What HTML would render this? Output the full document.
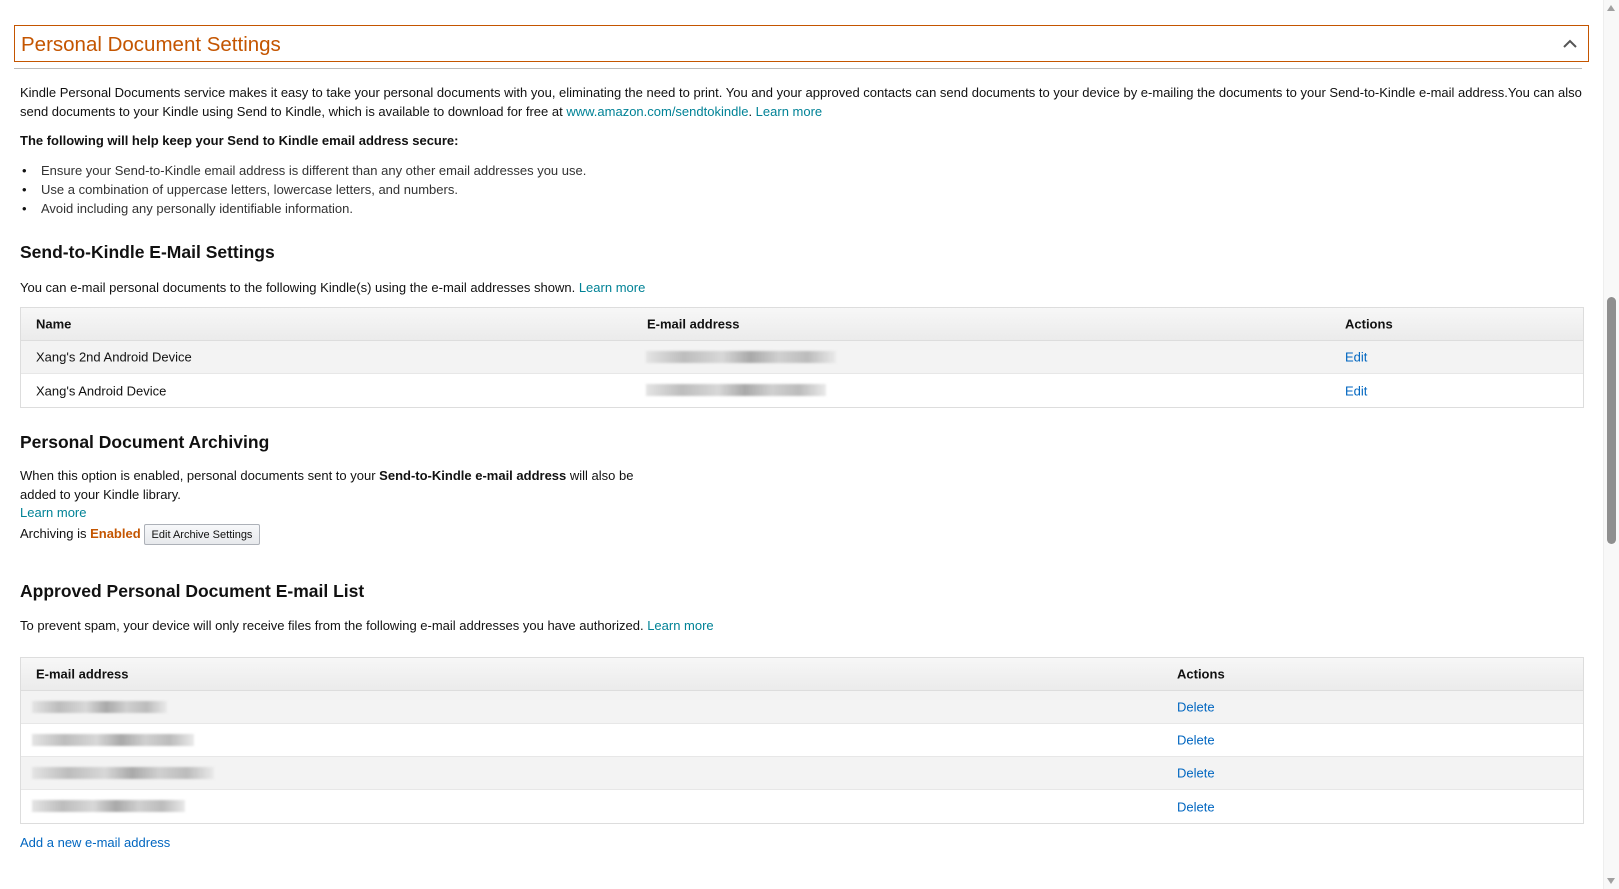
<!DOCTYPE html>
<html><head><meta charset="utf-8"><style>
*{margin:0;padding:0;box-sizing:border-box}
body{width:1619px;height:889px;overflow:hidden;background:#fff;font-family:"Liberation Sans",Arial,sans-serif;font-size:13px;color:#111;position:relative}
.a{position:absolute;white-space:nowrap}
.t{color:#008296}.l{color:#0066c0}
h3{position:absolute;font-size:17.5px;font-weight:bold;color:#111;white-space:nowrap}
.tbl{position:absolute;left:20px;width:1564px;border:1px solid #ddd}
.hd{height:33px;background:linear-gradient(#f7f7f7,#ebebeb);border-bottom:1px solid #ddd;position:relative;font-weight:bold}
.r{height:33px;position:relative;border-bottom:1px solid #e7e7e7}
.r:last-child{border-bottom:none}
.g{background:#f3f3f3}
.c{position:absolute;top:50%;transform:translateY(-50%);white-space:nowrap}
.bl{position:absolute;height:12px;top:10px;background:linear-gradient(90deg,#e4e4e4,#bdbdbd 20%,#d8d8d8 40%,#a9a9a9 55%,#d0d0d0 70%,#bcbcbc 85%,#eaeaea);filter:blur(1px)}
</style></head><body>
<div class="a" style="left:14px;top:25px;width:1575px;height:37px;border:1px solid #c45500"></div>
<div class="a" style="left:21px;top:33px;font-size:20.5px;color:#c45500">Personal Document Settings</div>
<svg class="a" style="left:1562px;top:38px" width="16" height="12"><path d="M2 9 L8 3 L14 9" stroke="#555" stroke-width="2" fill="none"/></svg>
<div class="a" style="left:14px;top:68px;width:1568px;height:1px;background:#bbb"></div>
<div class="a" style="left:20px;top:84px;line-height:18.6px;white-space:normal;width:1570px">Kindle Personal Documents service makes it easy to take your personal documents with you, eliminating the need to print. You and your approved contacts can send documents to your device by e-mailing the documents to your Send-to-Kindle e-mail address.You can also send documents to your Kindle using Send to Kindle, which is available to download for free at <span class="t">www.amazon.com/sendtokindle</span>. <span class="t">Learn more</span></div>
<div class="a" style="left:20px;top:133px;font-weight:bold">The following will help keep your Send to Kindle email address secure:</div>
<div class="a" style="left:22px;top:161px;line-height:19.2px">•<br>•<br>•</div>
<div class="a" style="left:41px;top:161px;line-height:19.2px;color:#333">Ensure your Send-to-Kindle email address is different than any other email addresses you use.<br>Use a combination of uppercase letters, lowercase letters, and numbers.<br>Avoid including any personally identifiable information.</div>
<h3 style="left:20px;top:242px">Send-to-Kindle E-Mail Settings</h3>
<div class="a" style="left:20px;top:280px">You can e-mail personal documents to the following Kindle(s) using the e-mail addresses shown. <span class="t">Learn more</span></div>
<div class="tbl" style="top:307px">
<div class="hd"><span class="c" style="left:15px">Name</span><span class="c" style="left:626px">E-mail address</span><span class="c" style="left:1324px">Actions</span></div>
<div class="r g"><span class="c" style="left:15px">Xang's 2nd Android Device</span><div class="bl" style="left:625px;width:190px"></div><span class="c l" style="left:1324px">Edit</span></div>
<div class="r"><span class="c" style="left:15px">Xang's Android Device</span><div class="bl" style="left:625px;width:180px"></div><span class="c l" style="left:1324px">Edit</span></div>
</div>
<h3 style="left:20px;top:432px">Personal Document Archiving</h3>
<div class="a" style="left:20px;top:467px;line-height:18.6px">When this option is enabled, personal documents sent to your <b>Send-to-Kindle e-mail address</b> will also be<br>added to your Kindle library.<br><span class="t">Learn more</span></div>
<div class="a" style="left:20px;top:526px">Archiving is <b style="color:#c45500">Enabled</b></div>
<div class="a" style="left:144px;top:524px;width:116px;height:21px;border:1px solid #adb1b8;border-radius:2px;background:linear-gradient(#f7f8fa,#e7e9ec);font-size:11px;line-height:21px;text-align:center">Edit Archive Settings</div>
<h3 style="left:20px;top:581px">Approved Personal Document E-mail List</h3>
<div class="a" style="left:20px;top:618px">To prevent spam, your device will only receive files from the following e-mail addresses you have authorized. <span class="t">Learn more</span></div>
<div class="tbl" style="top:657px">
<div class="hd"><span class="c" style="left:15px">E-mail address</span><span class="c" style="left:1156px">Actions</span></div>
<div class="r g"><div class="bl" style="left:11px;width:135px"></div><span class="c l" style="left:1156px">Delete</span></div>
<div class="r"><div class="bl" style="left:11px;width:162px"></div><span class="c l" style="left:1156px">Delete</span></div>
<div class="r g"><div class="bl" style="left:11px;width:182px"></div><span class="c l" style="left:1156px">Delete</span></div>
<div class="r"><div class="bl" style="left:11px;width:153px"></div><span class="c l" style="left:1156px">Delete</span></div>
</div>
<div class="a l" style="left:20px;top:835px">Add a new e-mail address</div>
<div class="a" style="left:1603px;top:0;width:16px;height:889px;background:#f8f8f8;border-left:1px solid #eee"></div>
<div class="a" style="left:1607px;top:297px;width:9px;height:247px;background:#8f8f8f;border-radius:5px"></div>
<svg class="a" style="left:1606px;top:4px" width="10" height="8"><path d="M1 7 L5 1 L9 7Z" fill="#a0a0a0"/></svg>
<svg class="a" style="left:1606px;top:877px" width="10" height="8"><path d="M1 1 L5 7 L9 1Z" fill="#a0a0a0"/></svg>
</body></html>
